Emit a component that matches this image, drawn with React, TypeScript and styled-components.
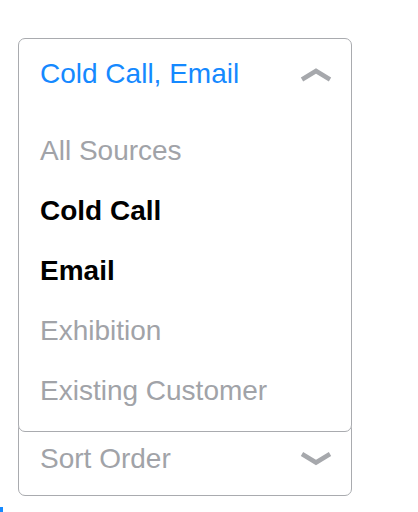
import React from 'react';
import styled, { createGlobalStyle } from 'styled-components';

const GlobalStyle = createGlobalStyle`
  body {
    margin: 0;
    background: #ffffff;
    font-family: "Liberation Sans", Arial, sans-serif;
  }
`;

const PageDiv = styled.div`
  padding: 38px 0 0 18px;
  width: 334px;
`;

const SelectPanel = styled.div`
  position: relative;
  z-index: 1;
  height: 394px;
  box-sizing: border-box;
  border: 1.5px solid #a9abaf;
  border-radius: 7px;
  background: #ffffff;
`;

const HeaderRow = styled.div`
  display: flex;
  align-items: center;
  justify-content: space-between;
  height: 70px;
  padding: 0 19px 0 21px;
`;

const HeaderText = styled.span`
  font-size: 28px;
  color: #1589ff;
`;

const OptionList = styled.ul`
  list-style: none;
  margin: 0;
  padding: 12px 0 0;
`;

const OptionItem = styled.li<{ $selected?: boolean }>`
  height: 60px;
  line-height: 60px;
  padding-left: 21px;
  font-size: 28px;
  font-weight: ${(p) => (p.$selected ? 700 : 400)};
  color: ${(p) => (p.$selected ? '#000000' : '#a1a3a8')};
`;

const SortBox = styled.div`
  display: flex;
  align-items: center;
  justify-content: space-between;
  height: 74px;
  box-sizing: border-box;
  margin-top: -10px;
  padding: 0 19px 0 21px;
  border: 1.5px solid #a9abaf;
  border-radius: 7px;
  font-size: 28px;
  color: #a1a3a8;
`;

const BlueMark = styled.div`
  width: 3px;
  height: 6px;
  margin: 11px 0 0 -18px;
  background: #1589ff;
`;

const Chevron = ({ up }: { up?: boolean }) => (
  <svg width="32" height="16" viewBox="0 0 32 16">
    <polyline
      points={up ? '2,13.5 16,5 30,13.5' : '2,3 16,11.5 30,3'}
      fill="none"
      stroke="#a6a8ac"
      strokeWidth="4.5"
      strokeLinejoin="miter"
    />
  </svg>
);

const options = [
  { label: 'All Sources', selected: false },
  { label: 'Cold Call', selected: true },
  { label: 'Email', selected: true },
  { label: 'Exhibition', selected: false },
  { label: 'Existing Customer', selected: false },
];

const App = () => {
  return (
    <>
      <GlobalStyle />
      <PageDiv>
        <SelectPanel>
          <HeaderRow>
            <HeaderText>Cold Call, Email</HeaderText>
            <Chevron up />
          </HeaderRow>
          <OptionList>
            {options.map((o) => (
              <OptionItem key={o.label} $selected={o.selected}>
                {o.label}
              </OptionItem>
            ))}
          </OptionList>
        </SelectPanel>
        <SortBox>
          <span>Sort Order</span>
          <Chevron />
        </SortBox>
        <BlueMark />
      </PageDiv>
    </>
  );
};

export default App;
